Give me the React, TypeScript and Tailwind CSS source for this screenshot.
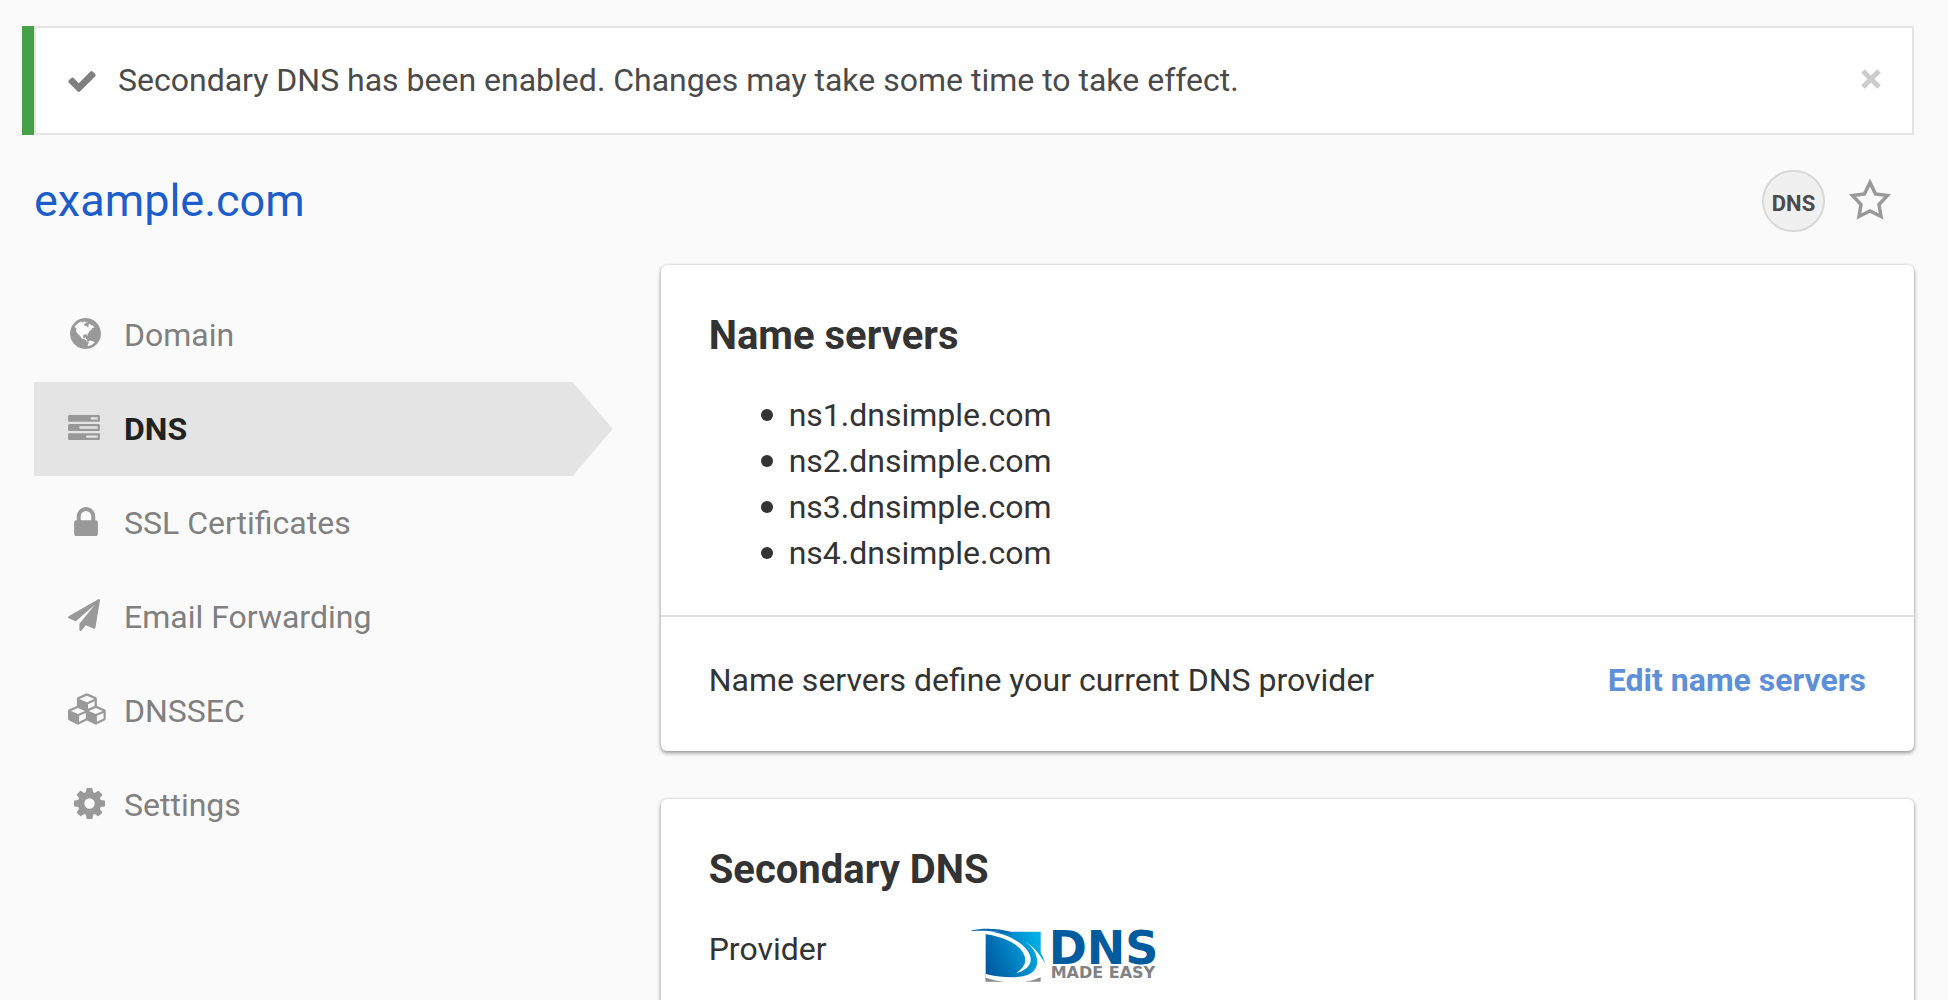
import React from 'react';

const paths = {
  check: 'M1671 566q0 40-28 68l-724 724-136 136q-28 28-68 28t-68-28l-136-136-362-362q-28-28-28-68t28-68l136-136q28-28 68-28t68 28l294 295 656-657q28-28 68-28t68 28l136 136q28 28 28 68z',
  globe:
    'M896 128q209 0 385.500 103t279.500 279.500 103 385.500-103 385.500-279.500 279.500-385.500 103-385.500-103-279.500-279.500-103-385.500 103-385.500 279.500-279.500 385.500-103zm274 521q-2 1-9.500 9.500t-13.500 9.500q2 0 4.500-5t5-11 3.500-7q6-7 22-15 14-6 52-12 34-8 51 11-2-2 9.500-13t14.500-12q3-2 15-4.500t15-7.500l2-22q-12 1-17.500-7t-6.500-21q0 2-6 8 0-7-4.500-8t-11.500 1-9 1q-10-3-15-7.500t-8-16.500-4-15q-2-5-9.500-11t-9.500-10q-1-2-2.500-5.500t-3-6.500-4-5.500-5.500-2.500-7 5-7.500 10-4.500 5q-3-2-6-1.500t-4.500 1-4.500 3-5 3.500q-3 2-8.500 3t-8.500 2q15-5-1-11-10-4-16-3 9-4 7.500-12t-8.500-14h5q-1-4-8.500-8.500t-17.500-8.500-13-6q-8-5-34-9.500t-33-.5q-5 6-4.500 10.500t4 14 3.500 12.500q1 6-5.500 13t-6.500 12q0 7 14 15.500t10 21.500q-3 8-16 16t-16 12q-5 8-1.500 18.500t10.500 16.500q2 2 1.500 4t-3.500 4.500-5.500 4-6.500 3.500l-3 2q-11 5-20.500-6t-13.500-26q-7-25-16-30-23-8-29 1-5-13-41-26-25-9-58-4 6-1 0-15-7-15-19-12 3-6 4-17.500t1-13.500q3-13 12-23 1-1 7-8.500t9.500-13.500.5-6q35 4 50-11 5-5 11.500-17t10.500-17q9-6 14-5.500t14.500 5.500 14.500 5q14 1 15.500-11t-7.500-20q12 1 3-17-4-7-8-9-12-4-27 5-8 4 2 8-1-1-9.500 10.500t-16.500 17.500-16-5q-1-1-5.500-13.500t-9.500-13.500q-8 0-16 15 3-8-11-15t-24-8q19-12-8-27-7-4-20.500-5t-19.500 4q-5 7-5.500 11.500t5 8 10.500 5.500 11.500 4 8.500 3q14 10 8 14-2 1-8.500 3.500t-11.500 4.500-6 4q-3 4 0 14t-2 14q-5-5-9-17.500t-7-16.500q7 9-25 6l-10-1q-4 0-16 2t-20.500 1-13.500-8q-4-8 0-20 1-4 4-2-4-3-11-9.500t-10-8.500q-46 15-94 41 6 1 12-1 5-2 13-6.500t10-5.500q34-14 42-7l5-5q14 16 20 25-7-4-30-1-20 6-22 12 7 12 5 18-4-3-11.500-10t-14.500-11-15-5q-16 0-22 1-146 80-235 222 7 7 12 8 4 1 5 9t2.500 11 11.500-3q9 8 3 19 1-1 44 27 19 17 21 21 3 11-10 18-1-2-9-9t-9-4q-3 5 .5 18.500t10.500 12.500q-7 0-9.500 16t-2.500 35.500-1 23.500l2 1q-3 12 5.500 34.500t21.500 19.500q-13 3 20 43 6 8 8 9 3 2 12 7.500t15 10 10 10.500q4 5 10 22.500t14 23.500q-2 6 9.500 20t10.500 23q-1 0-2.500 1t-2.500 1q3 7 15.500 14t15.500 13q1 3 2 10t3 11 8 2q2-20-24-62-15-25-17-29-3-5-5.500-15.500t-4.500-14.500q2 0 6 1.500t8.500 3.500 7.500 4 2 3q-3 7 2 17.500t12 18.500 17 19 12 13q6 6 14 19.500t0 13.500q9 0 20 10.500t17 19.500q5 8 8 26t5 24q2 7 8.500 13.500t12.500 9.500l16 8 13 7q5 2 18.500 10.500t21.500 11.500q10 4 16 4t14.500-2.500 13.500-3.500q15-2 29 15t21 21q36 19 55 11-2 1 .5 7.500t8 15.500 9 14.500 5.500 8.500q5 6 18 15t18 15q6-4 7-9-3 8 7 20t18 10q14-3 14-32-31 15-49-18 0-1-2.500-5.500t-4-8.500-2.500-8.500 0-7.500 5-3q9 0 10-3.500t-2-12.500-4-13q-1-8-11-20t-12-15q-5 9-16 8t-16-9q0 1-1.500 5.500t-1.500 6.500q-13 0-15-1 1-3 2.500-17.500t3.500-22.500q1-4 5.500-12t7.500-14.500 4-12.500-4.500-9.500-17.500-2.500q-19 1-26 20-1 3-3 10.500t-5 11.500-9 7q-7 3-24 2t-24-5q-13-8-22.500-29t-9.500-37q0-10 2.500-26.500t3-25-5.500-24.500q3-2 9-9.500t10-10.500q2-1 4.500-1.500t4.500 0 4-1.500 3-6q-1-1-4-3-3-3-4-3 7 3 28.500-1.500t27.500 1.500q15 11 22-2 0-1-2.500-9.500t-.5-13.500q5 27 29 9 3 3 15.500 5t17.500 5q3 2 7 5.500t5.500 4.500 5-.5 8.500-6.500q10 14 12 24 11 40 19 44 7 3 11 2t4.500-9.500 0-14-1.500-12.500l-1-8v-18l-1-8q-15-3-18.500-12t1.500-18.500 15-18.500q1-1 8-3.500t15.500-6.500 12.500-8q21-19 15-35 7 0 11-9-1 0-5-3t-7.500-5-4.500-2q9-5 2-16 5-3 7.500-11t7.500-10q9 12 21 2 8-8 1-16 5-7 20.500-10.500t18.500-9.500q7 2 8-2t1-12 3-12q4-5 15-9t13-5l17-11q3-4 0-4 18 2 31-11 10-11-6-20 3-6-3-9.500t-15-5.500q3-1 11.500-.5t10.500-1.500q15-10-7-16-17-5-43 12zm-163 877q206-36 351-189-3-3-12.500-4.500t-12.500-3.500q-18-7-24-8 1-7-2.500-13t-8-9-12.500-8-11-7q-2-2-7-6t-7-5.500-7.500-4.500-8.500-2-10 1l-3 1q-3 1-5.500 2.500t-5.500 3-4 3 0 2.500q-21-17-36-22-5-1-11-5.500t-10.500-7-10-1.500-11.500 7q-5 5-6 15t-2 13q-7-5 0-17.500t2-18.500q-3-6-10.500-4.500t-12 4.500-11.500 8.500-9 6.500-8.500 5.500-8.500 7.500q-3 4-6 12t-5 11q-2-4-11.500-6.500t-9.500-5.500q2 10 4 35t5 38q7 31-12 48-27 25-29 40-4 22 12 26 0 7-8 20.500t-7 21.500q0 6 2 16z',
  tasks:
    'M1024 1408h640v-128h-640v128zm-384-512h1024v-128h-1024v128zm640-512h384v-128h-384v128zm512 832v256q0 26-19 45t-45 19h-1664q-26 0-45-19t-19-45v-256q0-26 19-45t45-19h1664q26 0 45 19t19 45zm0-512v256q0 26-19 45t-45 19h-1664q-26 0-45-19t-19-45v-256q0-26 19-45t45-19h1664q26 0 45 19t19 45zm0-512v256q0 26-19 45t-45 19h-1664q-26 0-45-19t-19-45v-256q0-26 19-45t45-19h1664q26 0 45 19t19 45z',
  lock: 'M640 768h512v-192q0-106-75-181t-181-75-181 75-75 181v192zm832 96v576q0 40-28 68t-68 28h-960q-40 0-68-28t-28-68v-576q0-40 28-68t68-28h32v-192q0-184 132-316t316-132 316 132 132 316v192h32q40 0 68 28t28 68z',
  plane:
    'M1764 11q33 24 27 64l-256 1536q-5 29-32 45-14 8-31 8-11 0-24-5l-453-185-242 295q-18 23-49 23-13 0-22-4-19-7-30.500-23.500t-11.500-36.500v-349l864-1059-1069 925-395-162q-37-14-40-55-2-40 32-59l1664-960q15-9 32-9 20 0 36 11z',
  cubes:
    'M640 1632l384-192v-314l-384 164v342zm-64-454l404-173-404-173-404 173zm1088 454l384-192v-314l-384 164v342zm-64-454l404-173-404-173-404 173zm-448-293l384-165v-266l-384 164v267zm-64-379l441-189-441-189-441 189zm1088 518v416q0 36-19 67t-52 47l-448 224q-25 14-57 14t-57-14l-448-224q-4-2-7-4-2 2-7 4l-448 224q-25 14-57 14t-57-14l-448-224q-33-16-52-47t-19-67v-416q0-38 21.500-70t56.500-48l434-186v-400q0-38 21.500-70t56.500-48l448-192q23-10 50-10t50 10l448 192q35 16 56.500 48t21.500 70v400l434 186q36 16 57 48t21 70z',
  cog: 'M1152 896q0-106-75-181t-181-75-181 75-75 181 75 181 181 75 181-75 75-181zm512-109v222q0 12-8 23t-20 13l-185 28q-19 54-39 91 35 50 107 138 10 12 10 25t-9 23q-27 37-99 108t-94 71q-12 0-26-9l-138-108q-44 23-91 38-16 136-29 186-7 28-36 28h-222q-14 0-24.500-8.500t-11.500-21.500l-28-184q-49-16-90-37l-141 107q-10 9-25 9-14 0-25-11-126-114-165-168-7-10-7-23 0-12 8-23 15-21 51-66.500t54-70.500q-27-50-41-99l-183-27q-13-2-21-12.500t-8-23.500v-222q0-12 8-23t19-13l186-28q14-46 39-92-40-57-107-138-10-12-10-24 0-10 9-23 26-36 98.500-107.500t94.500-71.500q13 0 26 10l138 107q44-23 91-38 16-136 29-186 7-28 36-28h222q14 0 24.500 8.500t11.500 21.500l28 184q49 16 90 37l142-107q9-9 24-9 13 0 25 10 129 119 165 170 7 8 7 22 0 12-8 23-15 21-51 66.500t-54 70.500q26 50 41 98l183 28q13 2 21 12.500t8 23.500z',
};

type IconProps = { d: string; box: string; className: string };

function Icon({ d, box, className }: IconProps) {
  return (
    <svg viewBox={box} className={`shrink-0 ${className}`} fill="currentColor" aria-hidden="true">
      <path d={d} />
    </svg>
  );
}

const navItems = [
  { label: 'Domain', d: paths.globe, box: '128 128 1536 1536', icon: 'ml-0.5 h-[31px] w-[31px]' },
  { label: 'DNS', d: paths.tasks, box: '0 128 1792 1408', icon: 'h-[25px] w-8', active: true },
  { label: 'SSL Certificates', d: paths.lock, box: '320 128 1152 1408', icon: 'ml-1.5 h-[29px] w-6' },
  { label: 'Email Forwarding', d: paths.plane, box: '0 0 1792 1792', icon: 'h-8 w-8' },
  { label: 'DNSSEC', d: paths.cubes, box: '0 0 2304 1792', icon: 'h-8 w-10' },
  { label: 'Settings', d: paths.cog, box: '128 128 1536 1536', icon: 'ml-1.5 h-[31px] w-[31px]' },
];

function Alert() {
  return (
    <div role="status" className="flex border-l-12 border-[#43a047]">
      <div className="flex grow items-center border-2 border-[#e4e4e4] bg-white py-[29px] pr-[31px] pl-8 leading-[47px]">
        <Icon d={paths.check} box="121 270 1550 1252" className="h-[22px] w-7 text-[#808080]" />
        <p className="ml-[22px] grow text-[#4a4a4a]">
          Secondary DNS has been enabled. Changes may take some time to take effect.
        </p>
        <button type="button" aria-label="Dismiss" className="-mt-1 text-[#ccc]">
          <svg viewBox="0 0 20 20" className="h-5 w-5" stroke="currentColor" strokeWidth="5" aria-hidden="true">
            <path d="M2 2 18 18M18 2 2 18" />
          </svg>
        </button>
      </div>
    </div>
  );
}

function Sidebar() {
  return (
    <nav className="mr-12 pt-[23px]">
      {navItems.map((item) => (
        <a
          key={item.label}
          href="#"
          aria-current={item.active ? 'page' : undefined}
          className={
            item.active
              ? 'flex items-center bg-[#e4e4e4] py-6 pl-[34px] font-bold text-[#222] [clip-path:polygon(0_0,calc(100%-40px)_0,100%_50%,calc(100%-40px)_100%,0_100%)]'
              : 'flex items-center py-6 pl-[34px] text-[#808080]'
          }
        >
          <span className="flex w-14 items-center pb-1 text-[#999]">
            <Icon d={item.d} box={item.box} className={item.icon} />
          </span>
          {item.label}
        </a>
      ))}
    </nav>
  );
}

function LogoMark() {
  return (
    <svg viewBox="90 84 225 162" className="h-[54px] w-[75px] shrink-0" aria-hidden="true">
      <defs>
        <linearGradient id="sail" x1="0" y1="0.7" x2="1" y2="0.3">
          <stop offset="0" stopColor="#0058a0" />
          <stop offset="1" stopColor="#00aee6" />
        </linearGradient>
      </defs>
      <path d="M134 95H299V245H134Z" fill="url(#sail)" />
      <path d="M253 125C280 142 298 180 284 204C268 236 205 238 134 222V246H302V166C290 145 272 133 253 125Z" fill="#fff" />
      <path d="M253 125C282 132 304 154 312 190C298 164 280 142 253 125Z" fill="#00a5df" />
      <path d="M134 233C155 240 175 243 195 245H134ZM299 231V245H250C270 243 287 238 299 231Z" fill="#8a8c8f" />
      <path d="M130 92C205 98 264 138 269 174C272 198 250 213 226 219C245 205 256 192 252 172C245 140 200 112 134 103Z" fill="#fff" />
      <path d="M90 92C125 83 175 86 207 95L212 105C185 95 130 90 90 94Z" fill="#0068b0" />
    </svg>
  );
}

function ProviderLogo() {
  return (
    <div className="flex gap-[3px] font-['DejaVu_Sans',sans-serif] font-bold">
      <LogoMark />
      <div>
        <div className="text-[46px] leading-10 text-[#005b9f]">DNS</div>
        <div className="pl-0.5 text-[16px] leading-[10px] text-[#808285]">MADE EASY</div>
      </div>
    </div>
  );
}

const cardClass = 'rounded-md bg-white shadow-[0_2px_4px_rgba(0,0,0,0.4),0_0_2px_rgba(0,0,0,0.15)]';

export default function App() {
  return (
    <div className="min-h-screen bg-[#fafafa] pt-[26px] pr-[34px] pl-[22px] font-[Roboto,sans-serif] text-[32px] leading-[46px] text-[#333]">
      <Alert />
      <div className="pl-3">
        <header className="flex items-center justify-between pt-[35px] pr-[23px] pb-[33px]">
          <h1 className="text-[45px]">
            <a href="#" className="text-[#1b5ecb]">
              example.com
            </a>
          </h1>
          <div className="flex items-center gap-6">
            <span className="flex h-[62px] w-[63px] items-center justify-center rounded-full border-2 border-[#d8d8d8] bg-[#f0f0f0] pt-1.5 text-[22px] font-bold text-[#4a4a4a]">
              DNS
            </span>
            <button type="button" aria-label="Add to favorites" className="-mt-1 text-[#999]">
              <svg
                viewBox="0 0 42 42"
                className="h-[42px] w-[42px]"
                fill="none"
                stroke="currentColor"
                strokeWidth="3.500"
                aria-hidden="true"
              >
                <path d="M21 4.500 26.500 16 38.500 17.500 30 26.500 32 38.500 21 33 10 38.500 12 26.500 3.500 17.500 15.500 16Z" />
              </svg>
            </button>
          </div>
        </header>

        <div className="grid grid-cols-3">
          <Sidebar />
          <main className="col-span-2 flex flex-col gap-12">
            <section className={cardClass}>
              <div className="px-12 pt-12 pb-[39px]">
                <h2 className="text-[40px] font-bold">Name servers</h2>
                <ul className="mt-[33px] pl-[52px] [&>li]:flex [&>li]:items-center [&>li]:gap-4 [&>li]:before:h-3 [&>li]:before:w-3 [&>li]:before:rounded-full [&>li]:before:bg-[#333]">
                  <li>ns1.dnsimple.com</li>
                  <li>ns2.dnsimple.com</li>
                  <li>ns3.dnsimple.com</li>
                  <li>ns4.dnsimple.com</li>
                </ul>
              </div>
              <div className="flex items-center justify-between border-t-2 border-[#e4e4e4] px-12 pt-10 pb-12">
                <p>Name servers define your current DNS provider</p>
                <a href="#" className="font-bold text-[#5e8fd9]">
                  Edit name servers
                </a>
              </div>
            </section>

            <section className={cardClass}>
              <div className="px-12 pt-12 pb-[39px]">
                <h2 className="text-[40px] font-bold">Secondary DNS</h2>
                <dl className="mt-[33px] flex items-start">
                  <dt className="w-[262px]">Provider</dt>
                  <dd className="pt-0.5">
                    <ProviderLogo />
                  </dd>
                </dl>
              </div>
            </section>
          </main>
        </div>
      </div>
    </div>
  );
}
